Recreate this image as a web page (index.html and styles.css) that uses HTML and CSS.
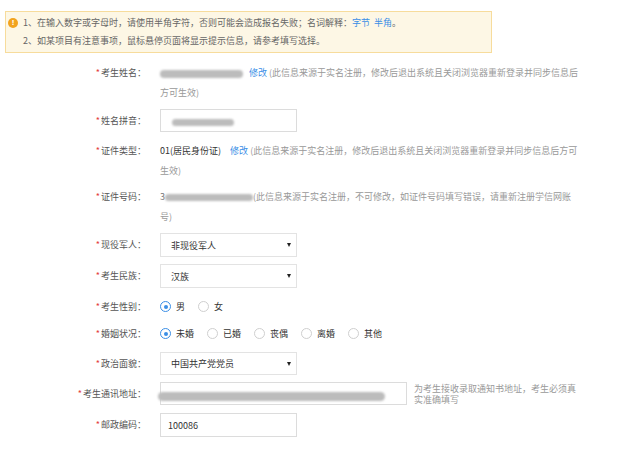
FILE: index.html
```html
<!DOCTYPE html>
<html lang="zh-CN">
<head>
<meta charset="utf-8">
<title>考生信息</title>
<link rel="stylesheet" href="styles.css">
</head>
<body>
<div class="notice">
  <span class="notice-icon">!</span>
  <div class="notice-text">
    <p>1、在输入数字或字母时，请使用半角字符，否则可能会造成报名失败；名词解释：<a class="link" href="#">字节</a>&nbsp;&nbsp;<a class="link" href="#">半角</a>。</p>
    <p>2、如某项目有注意事项，鼠标悬停页面将显示提示信息，请参考填写选择。</p>
  </div>
</div>

<div class="form">
  <div class="row row--text mb6">
    <div class="label"><span class="req">*</span>考生姓名：</div>
    <div class="value"><span class="blur blur--name"></span><a class="link edit" href="#">修改</a> <span class="info">(此信息来源于实名注册，修改后退出系统且关闭浏览器重新登录并同步信息后方可生效)</span></div>
  </div>

  <div class="row mb9">
    <div class="label"><span class="req">*</span>姓名拼音：</div>
    <div class="value"><div class="input"><span class="blur blur--pinyin"></span></div></div>
  </div>

  <div class="row row--text mb6">
    <div class="label"><span class="req">*</span>证件类型：</div>
    <div class="value"><span class="strong">01(居民身份证)</span><a class="link edit edit--wide" href="#">修改</a> <span class="info">(此信息来源于实名注册，修改后退出系统且关闭浏览器重新登录并同步信息后方可生效)</span></div>
  </div>

  <div class="row row--text mb6">
    <div class="label"><span class="req">*</span>证件号码：</div>
    <div class="value"><span class="digit">3</span><span class="blur blur--id"></span><span class="info">(此信息来源于实名注册，不可修改，如证件号码填写错误，请重新注册学信网账号)</span></div>
  </div>

  <div class="row mb7">
    <div class="label"><span class="req">*</span>现役军人：</div>
    <div class="value"><div class="select"><span>非现役军人</span><span class="caret"></span></div></div>
  </div>

  <div class="row mb7">
    <div class="label"><span class="req">*</span>考生民族：</div>
    <div class="value"><div class="select"><span>汉族</span><span class="caret"></span></div></div>
  </div>

  <div class="row mb4">
    <div class="label"><span class="req">*</span>考生性别：</div>
    <div class="value radios">
      <span class="opt"><span class="radio radio--on"></span>男</span>
      <span class="opt"><span class="radio"></span>女</span>
    </div>
  </div>

  <div class="row mb7">
    <div class="label"><span class="req">*</span>婚姻状况：</div>
    <div class="value radios">
      <span class="opt"><span class="radio radio--on"></span>未婚</span>
      <span class="opt"><span class="radio"></span>已婚</span>
      <span class="opt"><span class="radio"></span>丧偶</span>
      <span class="opt"><span class="radio"></span>离婚</span>
      <span class="opt"><span class="radio"></span>其他</span>
    </div>
  </div>

  <div class="row mb7">
    <div class="label"><span class="req">*</span>政治面貌：</div>
    <div class="value"><div class="select select--short"><span>中国共产党党员</span><span class="caret"></span></div></div>
  </div>

  <div class="row mb8">
    <div class="label"><span class="req">*</span>考生通讯地址：</div>
    <div class="value"><div class="input input--wide"><span class="blur blur--addr"></span></div><p class="hint">为考生接收录取通知书地址，考生必须真实准确填写</p></div>
  </div>

  <div class="row">
    <div class="label"><span class="req">*</span>邮政编码：</div>
    <div class="value"><div class="input input--tall"><span class="strong">100086</span></div></div>
  </div>
</div>
</body>
</html>
```

FILE: styles.css
```css
* { box-sizing: border-box; margin: 0; padding: 0; }

body {
  margin: 0;
  background: #fff;
  font-family: "Noto Sans CJK SC", "Microsoft YaHei", sans-serif;
  font-size: 9px;
  color: #555;
}

.notice {
  margin: 11px 0 0 5px;
  width: 487px;
  height: 42px;
  border: 1px solid #f7dc9c;
  background: #fdf7e5;
  display: flex;
  padding: 2px 0 0 2px;
}

.notice-icon {
  flex: none;
  width: 10px;
  height: 10px;
  border-radius: 50%;
  background: #f2a31e;
  color: #fff;
  font-family: "Liberation Sans", sans-serif;
  font-size: 8px;
  font-weight: bold;
  line-height: 10px;
  text-align: center;
  margin: 4px 5px 0 0;
}

.notice-text p {
  line-height: 18px;
  color: #666;
  white-space: nowrap;
}

.link { color: #3a8ee6; text-decoration: none; }

.form {
  margin-top: 10px;
  display: flex;
  flex-direction: column;
}

.row {
  display: grid;
  grid-template-columns: 146px 420px;
  column-gap: 14px;
}

.mb4 { margin-bottom: 4px; }
.mb6 { margin-bottom: 6px; }
.mb7 { margin-bottom: 7px; }
.mb8 { margin-bottom: 8px; }
.mb9 { margin-bottom: 9px; }

.label {
  text-align: right;
  color: #555;
  line-height: 23px;
  white-space: nowrap;
}

.req { color: #e4393c; margin-right: 1px; }

.row--text .label,
.row--text .value { line-height: 20px; }

.value { display: flex; align-items: center; }
.row--text .value { display: block; }

.strong { color: #333; }
.digit { color: #777; }
.info { color: #999; }

.edit { margin-left: 6px; }
.edit--wide { margin-left: 9px; }

.blur {
  display: inline-block;
  background: #bcbcbc;
  border-radius: 5px;
  filter: blur(0.8px);
  vertical-align: middle;
}
.blur--name { width: 83px; height: 8px; }
.blur--id { width: 88px; height: 7px; }
.blur--pinyin { width: 62px; height: 7px; margin-left: 4px; margin-top: 3px; }
.blur--addr { width: 227px; height: 9px; margin-left: -3px; margin-top: 5px; }

.input {
  width: 137px;
  height: 23px;
  border: 1px solid #dcdcdc;
  background: #fff;
  display: flex;
  align-items: center;
  padding-left: 7px;
}
.input--wide { width: 247px; padding-left: 0; }
.input--tall { height: 24px; }

.select {
  width: 137px;
  height: 24px;
  border: 1px solid #e3e3e3;
  background: #fff;
  display: flex;
  align-items: center;
  justify-content: space-between;
  padding: 0 5px 0 10px;
  color: #333;
}
.select--short { height: 23px; }

.caret {
  width: 0;
  height: 0;
  border-left: 2.5px solid transparent;
  border-right: 2.5px solid transparent;
  border-top: 4px solid #222;
}

.radios { height: 23px; gap: 13px; }

.opt {
  display: flex;
  align-items: center;
  gap: 5px;
  color: #333;
}

.radio {
  width: 11px;
  height: 11px;
  border-radius: 50%;
  border: 1px solid #cfcfcf;
  background: #fff;
  display: flex;
  align-items: center;
  justify-content: center;
}
.radio--on { border-color: #3a8ee6; }
.radio--on::after {
  content: "";
  width: 4px;
  height: 4px;
  border-radius: 50%;
  background: #3a8ee6;
}

.hint {
  width: 166px;
  margin-left: 7px;
  color: #999;
  line-height: 11px;
}
```
